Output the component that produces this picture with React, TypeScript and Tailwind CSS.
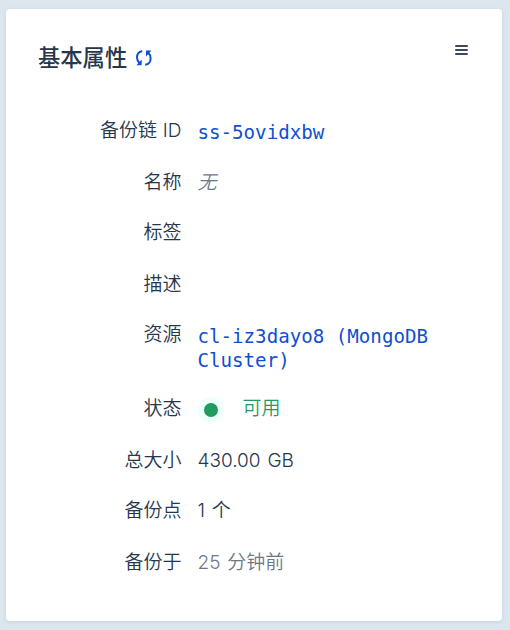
import type { ReactNode } from 'react';

const mono = "font-['DejaVu_Sans_Mono','Noto_Sans_CJK_SC',monospace] text-[19.15px] leading-6 font-normal [word-spacing:0px] text-[#0f4fd1]";

function Row({ label, height, children }: { label: string; height: string; children?: ReactNode }) {
  return (
    <div className={`flex items-start ${height}`}>
      <dt className="w-[143.5px] shrink-0 text-right text-[#26374d] [word-spacing:0.5px]">{label}</dt>
      <dd className="ml-4 flex-1 text-[#26374d]">{children}</dd>
    </div>
  );
}

function RefreshIcon() {
  return (
    <svg width="18" height="18" viewBox="0 0 18 18" fill="none" stroke="#0f4fd1" strokeWidth="2">
      <path d="M7.2 2C4.2 2.6 2 5.2 2 8.6C2 10.9 2.8 12.6 4.6 14.2" />
      <path d="M10.2 15.8C13.4 15.2 15.6 12.8 15.6 9.4C15.6 7.1 14.8 5.2 13 3.6" />
      <path d="M6.6 10.4V16.2H1.4Z" fill="#0f4fd1" stroke="none" />
      <path d="M11 7.4V1.6H16.4Z" fill="#0f4fd1" stroke="none" />
    </svg>
  );
}

export default function App() {
  return (
    <div className="h-[630px] w-[510px] bg-[#dce6ee] pt-[9px] pl-[6px] font-['Inter','Noto_Sans_CJK_SC',sans-serif]">
      <section className="h-[612px] w-[496px] rounded-[4px] bg-white px-8 shadow-[0_1px_4px_rgba(60,90,120,0.12)]">
        <header className="flex h-[108px] items-start justify-between pt-[32px]">
          <div className="flex items-center gap-[8px] pt-px">
            <h2 className="text-[22.3px] leading-8 font-medium text-[#26374d]">基本属性</h2>
            <RefreshIcon />
          </div>
          <button aria-label="菜单" className="mt-[4px] mr-[2px] flex w-[13px] flex-col gap-[2px]">
            <span className="h-[2px] w-full rounded-[1px] bg-[#3a495e]" />
            <span className="h-[2px] w-full rounded-[1px] bg-[#3a495e]" />
            <span className="h-[2px] w-full rounded-[1px] bg-[#3a495e]" />
          </button>
        </header>
        <dl className="text-[19px] leading-7 font-[350] [word-spacing:1.5px]">
          <Row label="备份链 ID" height="h-[52px]"><div className={`${mono} pt-[4px]`}>ss-5ovidxbw</div></Row>
          <Row label="名称" height="h-[50px]"><em className="text-[#6c7889]">无</em></Row>
          <Row label="标签" height="h-[52px]" />
          <Row label="描述" height="h-[50px]" />
          <Row label="资源" height="h-[74px]"><div className={`${mono} pt-[4px]`}>cl-iz3dayo8 (MongoDB Cluster)</div></Row>
          <Row label="状态" height="h-[52px]">
            <div className="flex items-center text-[#219b62]">
              <span className="mt-[1px] flex size-[26px] items-center justify-center rounded-full bg-[#effffa]">
                <span className="size-[14px] rounded-full bg-[#219b62]" />
              </span>
              <span className="ml-[19px]">可用</span>
            </div>
          </Row>
          <Row label="总大小" height="h-[50px]">430.00 GB</Row>
          <Row label="备份点" height="h-[52px]">1 个</Row>
          <Row label="备份于" height="h-[50px]"><span className="text-[#6c7889]">25 分钟前</span></Row>
        </dl>
      </section>
    </div>
  );
}
